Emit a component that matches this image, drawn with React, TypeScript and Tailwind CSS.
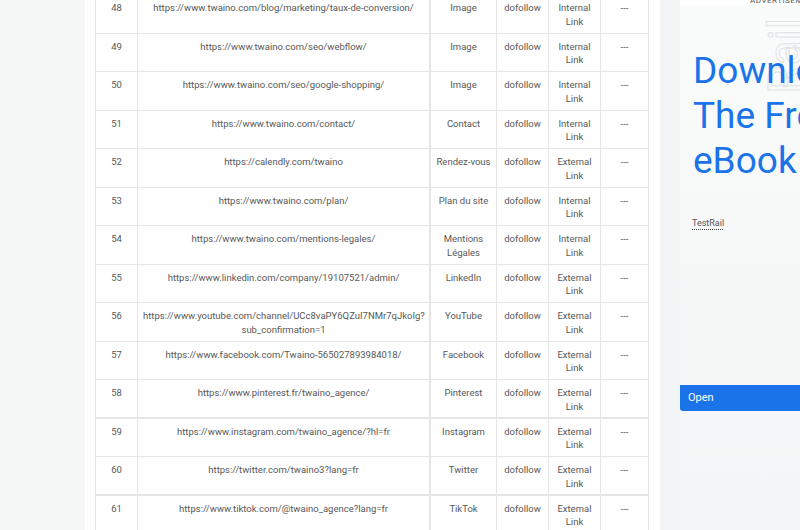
type Row = {
  n: number;
  url: string[];
  anchor: string;
  rel: string;
  kind: string;
  thick?: boolean;
};

const rows: Row[] = [
  { n: 48, url: ["https://www.twaino.com/blog/marketing/taux-de-conversion/"], anchor: "Image", rel: "dofollow", kind: "Internal" },
  { n: 49, url: ["https://www.twaino.com/seo/webflow/"], anchor: "Image", rel: "dofollow", kind: "Internal" },
  { n: 50, url: ["https://www.twaino.com/seo/google-shopping/"], anchor: "Image", rel: "dofollow", kind: "Internal" },
  { n: 51, url: ["https://www.twaino.com/contact/"], anchor: "Contact", rel: "dofollow", kind: "Internal" },
  { n: 52, url: ["https://calendly.com/twaino"], anchor: "Rendez-vous", rel: "dofollow", kind: "External" },
  { n: 53, url: ["https://www.twaino.com/plan/"], anchor: "Plan du site", rel: "dofollow", kind: "Internal" },
  { n: 54, url: ["https://www.twaino.com/mentions-legales/"], anchor: "Mentions Légales", rel: "dofollow", kind: "Internal" },
  { n: 55, url: ["https://www.linkedin.com/company/19107521/admin/"], anchor: "LinkedIn", rel: "dofollow", kind: "External" },
  {
    n: 56,
    url: ["https://www.youtube.com/channel/UCc8vaPY6QZuI7NMr7qJkoIg?", "sub_confirmation=1"],
    anchor: "YouTube",
    rel: "dofollow",
    kind: "External",
  },
  { n: 57, url: ["https://www.facebook.com/Twaino-565027893984018/"], anchor: "Facebook", rel: "dofollow", kind: "External" },
  { n: 58, url: ["https://www.pinterest.fr/twaino_agence/"], anchor: "Pinterest", rel: "dofollow", kind: "External", thick: true },
  { n: 59, url: ["https://www.instagram.com/twaino_agence/?hl=fr"], anchor: "Instagram", rel: "dofollow", kind: "External" },
  { n: 60, url: ["https://twitter.com/twaino3?lang=fr"], anchor: "Twitter", rel: "dofollow", kind: "External", thick: true },
  { n: 61, url: ["https://www.tiktok.com/@twaino_agence?lang=fr"], anchor: "TikTok", rel: "dofollow", kind: "External" },
];

function LinkRow({ row }: { row: Row }) {
  const cell = row.thick
    ? "border-r border-b-2 border-[#e6e6e6] px-[5px] pt-[6px] text-center"
    : "border-r border-b border-[#e6e6e6] px-[5px] pt-[6px] text-center";
  return (
    <div className="grid h-[38.5px] grid-cols-[42px_293px_66px_52px_52px_48px]">
      <div className={cell}>{row.n}</div>
      <div className={cell + " border-r-2 px-[3px]"}>
        {row.url.map((u, i) => (
          <div key={i} className="whitespace-nowrap">
            {u}
          </div>
        ))}
      </div>
      <div className={cell}>{row.anchor}</div>
      <div className={cell}>{row.rel}</div>
      <div className={cell}>
        {row.kind}
        <br />
        Link
      </div>
      <div className={cell}>---</div>
    </div>
  );
}

export default function App() {
  return (
    <div className="flex h-[530px] w-[800px] overflow-hidden bg-[#f6f7f7] font-['Roboto',sans-serif]">
      <div className="w-[85px] shrink-0 bg-[#f6f7f7]" />

      <main className="w-[575px] shrink-0 bg-white pl-[10px]">
        <div className="-mt-[5px] w-[555px] border-l border-[#e6e6e6] text-[9.5px] leading-[13.5px] text-[#585858]">
          {rows.map((r) => (
            <LinkRow key={r.n} row={r} />
          ))}
        </div>
      </main>

      <aside className="w-[140px] shrink-0 bg-[#f2f5f6] pl-[20px]">
        <div className="flex h-[5px] items-end overflow-hidden bg-white pl-[70px]">
          <span className="whitespace-nowrap text-[8px] leading-[8px] tracking-[0.5px] text-[#555]">
            ADVERTISEMENT
          </span>
        </div>
        <div className="relative h-[525px] w-[120px] overflow-hidden bg-gradient-to-b from-[#fafbfb] to-[#f3f6f6]">
          <div className="absolute left-[82px] top-[13px] h-[84px] w-[44px]">
            <span className="block rotate-180 text-[46px] leading-none text-transparent [writing-mode:vertical-rl] [-webkit-text-stroke:1px_#e0e3e6]">
              Rail
            </span>
          </div>
          <h2 className="relative mt-[43px] whitespace-nowrap pl-[13px] text-[37px] font-normal leading-[45px] text-[#1a73e8]">
            Download
            <br />
            The Free
            <br />
            eBook
          </h2>
          <div className="mt-[26px] pl-[12px]">
            <span className="text-[9px] leading-[12px] text-[#555] underline decoration-dotted decoration-[#444] underline-offset-[3px]">
              TestRail
            </span>
          </div>
          <button className="mt-[152px] flex h-[26px] w-[120px] items-center rounded-bl-[3px] bg-[#1a73e8] pl-[8px] text-[11px] text-white">
            Open
          </button>
        </div>
      </aside>
    </div>
  );
}
